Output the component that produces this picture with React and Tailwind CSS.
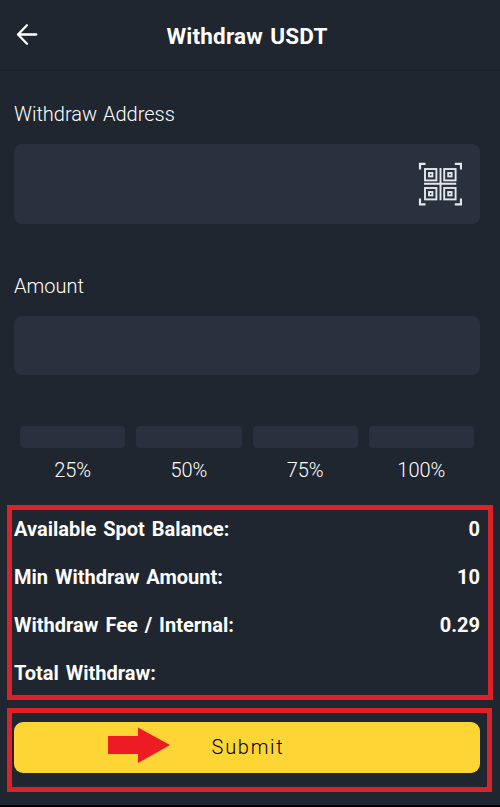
import { useState } from "react";

const percents = ["25%", "50%", "75%", "100%"];

const details = [
  { label: "Available Spot Balance:", value: "0" },
  { label: "Min Withdraw Amount:", value: "10" },
  { label: "Withdraw Fee / Internal:", value: "0.29" },
  { label: "Total Withdraw:", value: "" },
];

const BackIcon = () => (
  <svg width="22" height="22" viewBox="0 0 22 22" fill="none" stroke="#fff" strokeWidth="2.3" strokeLinecap="round" strokeLinejoin="round">
    <path d="M20.3 10.5H2M11 1.3L2 10.5L11 19.7" />
  </svg>
);

const QrIcon = () => (
  <svg width="44" height="44" viewBox="0 0 44 44" fill="none" stroke="#e4e7ec" strokeWidth="1.9">
    <path d="M2 7.5V1.8H7.5M36.8 1.8H43V7.5M43 36.5V42.4H36.8M7.5 42.4H2V36.5" strokeWidth="2.2" />
    <path d="M22.5 6V38.2M6 21.8H38.2" strokeWidth="1.9" />
    <rect x="7" y="7" width="11.4" height="11.4" />
    <rect x="26.2" y="7" width="11.4" height="11.4" />
    <rect x="7" y="26" width="11.4" height="11.4" />
    <rect x="26.2" y="26" width="11.4" height="11.4" />
    <rect x="11" y="11" width="3.4" height="3.4" />
    <rect x="30.2" y="11" width="3.4" height="3.4" />
    <rect x="11" y="30" width="3.4" height="3.4" />
    <rect x="30.2" y="30" width="3.4" height="3.4" />
  </svg>
);

const App = () => {
  const [address, setAddress] = useState("");
  const [amount, setAmount] = useState("");

  return (
    <div className="flex h-[807px] w-[500px] flex-col overflow-hidden border-b-2 border-black bg-[#1f262f] font-['Roboto',sans-serif] text-white">
      {/* Header */}
      <header className="grid h-[71px] shrink-0 grid-cols-[60px_1fr_66px] items-center border-b-2 border-[#1b2229]">
        <button type="button" aria-label="Back" className="pl-4">
          <BackIcon />
        </button>
        <h1 className="pt-0.5 text-center text-[22.5px] leading-7 font-bold tracking-[0.2px] [word-spacing:1.5px]">
          Withdraw USDT
        </h1>
      </header>

      {/* Address */}
      <label htmlFor="address" className="mt-[31px] ml-3.5 h-6 text-[20px] leading-6 font-light [word-spacing:1px]">
        Withdraw Address
      </label>
      <div className="mt-[18px] mr-5 ml-3.5 flex h-20 shrink-0 items-center rounded-lg bg-[#2a303d] pr-[18px]">
        <input
          id="address"
          value={address}
          onChange={(e) => setAddress(e.target.value)}
          className="h-full min-w-0 flex-1 bg-transparent px-4 outline-none"
        />
        <QrIcon />
      </div>

      {/* Amount */}
      <label htmlFor="amount" className="mt-[50px] ml-3.5 h-6 text-[20px] leading-6 font-light">
        Amount
      </label>
      <div className="mt-[18px] mr-5 ml-3.5 h-[59px] shrink-0 rounded-lg bg-[#2a303d]">
        <input
          id="amount"
          value={amount}
          onChange={(e) => setAmount(e.target.value)}
          className="h-full w-full bg-transparent px-4 outline-none"
        />
      </div>

      <div className="mt-[51px] mr-[26px] ml-5 grid grid-cols-4 gap-[11px]">
        {percents.map((p) => (
          <button key={p} type="button" className="flex flex-col items-center gap-[10px]">
            <span className="h-[22px] w-full rounded bg-[#2a303d]" />
            <span className="text-[20px] leading-6 font-light">{p}</span>
          </button>
        ))}
      </div>

      {/* Details */}
      <div className="mt-[23px] mr-[7px] ml-[7px] h-[195px] shrink-0 border-5 border-[#dc2128] pt-[7px] pr-2 pl-0.5">
        {details.map((d) => (
          <div key={d.label} className="flex h-[47.85px] justify-between text-[20px] leading-6 font-bold [word-spacing:2px]">
            <span>{d.label}</span>
            <span>{d.value}</span>
          </div>
        ))}
      </div>

      {/* Submit */}
      <div className="mt-2 mr-2 ml-[7px] h-[84px] shrink-0 border-5 border-[#dc2128] pt-[9px] pr-[7px] pl-0.5">
        <button
          type="button"
          className="relative flex h-[51px] w-full items-center justify-center rounded-[9px] bg-[#fdd535] pb-0.5 pl-0.5 text-[20px] font-light tracking-[1.7px] text-black"
        >
          <svg className="absolute top-[5px] left-[94px]" width="62" height="36" viewBox="0 0 62 36" fill="#ed1c24">
            <path d="M0 9H30V0.5L62 18L30 36V27H0Z" />
          </svg>
          Submit
        </button>
      </div>
    </div>
  );
};

export default App;
